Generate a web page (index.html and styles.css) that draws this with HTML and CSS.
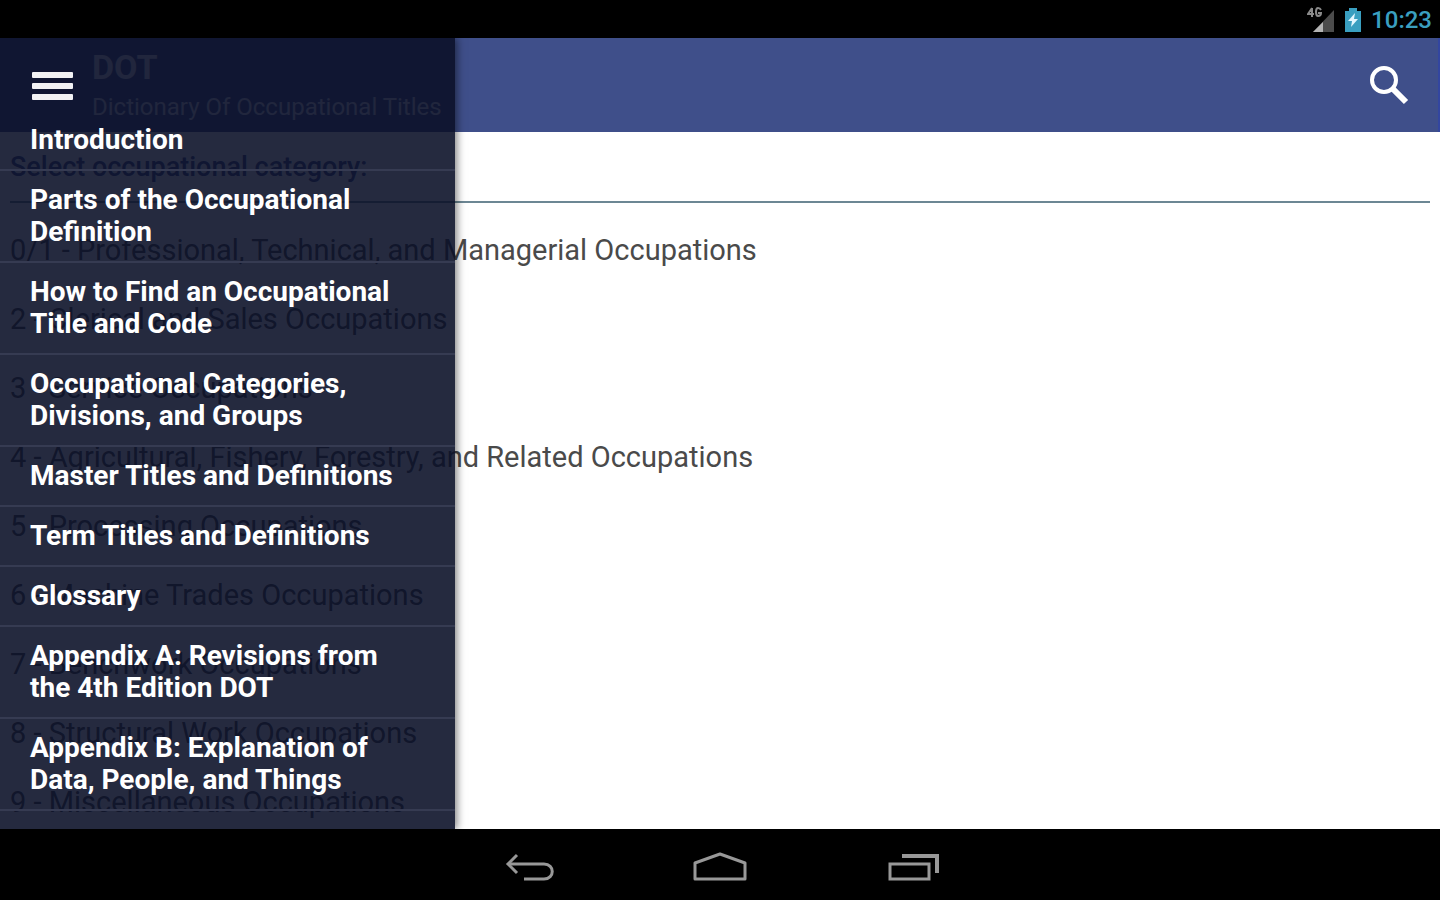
FILE: index.html
```html
<!DOCTYPE html>
<html lang="en">
<head>
    <meta charset="utf-8">
    <title>DOT - Dictionary Of Occupational Titles</title>
    <link rel="stylesheet" href="styles.css">
</head>
<body>
    <div class="status-bar">
        <svg class="signal" width="28" height="28" viewBox="0 0 28 28">
            <path d="M27 4V26H6Z" fill="#4c4c4c"/>
            <path d="M16 16V26H6Z" fill="#b4b4b4"/>
            <path d="M5 2L1 8H7M5 2V11M14 4Q13 2 11 2Q9 2 9 6Q9 10 11 10Q14 10 14 7H11" fill="none" stroke="#8a8a8a" stroke-width="2"/>
        </svg>
        <svg class="battery" width="16" height="24" viewBox="0 0 16 24">
            <path d="M0 3H4V0H12V3H16V24H0Z" fill="#3a9fc0"/>
            <path d="M10 5L3 13H7L6 19L13 11H9Z" fill="#e4f7ff"/>
        </svg>
        <span class="clock">10:23</span>
    </div>

    <div class="app">
        <header class="app-bar">
            <div class="app-title">
                <h1>DOT</h1>
                <p>Dictionary Of Occupational Titles</p>
            </div>
            <button class="icon-button" aria-label="Search">
                <svg width="42" height="42" viewBox="0 0 42 42" fill="none" stroke="#fff">
                    <circle cx="16" cy="16" r="12" stroke-width="4"/>
                    <path d="M25 25L38 38" stroke-width="6"/>
                </svg>
            </button>
        </header>

        <main class="content">
            <h2>Select occupational category:</h2>
            <ul class="categories">
                <li><a href="#">0/1 - Professional, Technical, and Managerial Occupations</a></li>
                <li><a href="#">2 - Clerical and Sales Occupations</a></li>
                <li><a href="#">3 - Service Occupations</a></li>
                <li><a href="#">4 - Agricultural, Fishery, Forestry, and Related Occupations</a></li>
                <li><a href="#">5 - Processing Occupations</a></li>
                <li><a href="#">6 - Machine Trades Occupations</a></li>
                <li><a href="#">7 - Benchwork Occupations</a></li>
                <li><a href="#">8 - Structural Work Occupations</a></li>
                <li><a href="#">9 - Miscellaneous Occupations</a></li>
            </ul>
        </main>

        <!-- drawer slides over the list -->
        <nav class="drawer">
            <button class="menu-button" aria-label="Close menu">
                <svg width="42" height="30" viewBox="0 0 42 30" fill="#f2f2f4">
                    <rect x="0" y="1" width="41" height="6" rx="1"/>
                    <rect x="0" y="12" width="41" height="6" rx="1"/>
                    <rect x="0" y="23" width="41" height="6" rx="1"/>
                </svg>
            </button>
            <a href="#">Introduction</a>
            <a href="#">Parts of the Occupational Definition</a>
            <a href="#">How to Find an Occupational Title and Code</a>
            <a href="#">Occupational Categories, Divisions, and Groups</a>
            <a href="#">Master Titles and Definitions</a>
            <a href="#">Term Titles and Definitions</a>
            <a href="#">Glossary</a>
            <a href="#">Appendix A: Revisions from the 4th Edition DOT</a>
            <a href="#">Appendix B: Explanation of Data, People, and Things</a>
        </nav>
    </div>

    <div class="system-bar">
        <button aria-label="Back">
            <svg width="56" height="36" viewBox="0 0 56 36" fill="none" stroke="#989898">
                <path d="M8 13H44C55 13 55 28 44 28H24" stroke-width="3"/>
                <path d="M17 4L8 13L17 22" stroke-width="3"/>
            </svg>
        </button>
        <button aria-label="Home">
            <svg width="56" height="36" viewBox="0 0 56 36" fill="none" stroke="#989898" stroke-width="3" stroke-linejoin="round">
                <path d="M3 28V12L28 3L53 12V28Z"/>
            </svg>
        </button>
        <button aria-label="Recent apps">
            <svg width="56" height="36" viewBox="0 0 56 36" fill="none" stroke="#989898" stroke-width="3">
                <rect x="6" y="13" width="39" height="15"/>
                <path d="M18 5H53V22" stroke-width="4"/>
            </svg>
        </button>
    </div>
</body>
</html>
```

FILE: styles.css
```css
* { box-sizing: border-box; }
body { margin: 0; height: 100vh; display: flex; flex-direction: column; background: #000; color: #4a4a4a; font-family: Roboto, "Liberation Sans", sans-serif; }
h1, h2, p, ul { margin: 0; padding: 0; }
a { color: inherit; text-decoration: none; }
button { padding: 0; border: 0; background: none; cursor: pointer; }
svg { display: block; }

.status-bar { flex: none; height: 38px; padding: 2px 8px 0; display: flex; align-items: center; justify-content: flex-end; gap: 10px; background: #000; }
.clock { color: #3a9fc0; font-size: 24px; font-weight: 500; line-height: 32px; }

.app { flex: 1; min-height: 0; position: relative; overflow: hidden; background: #fff; }
.app-bar { height: 94px; padding: 0 28px 0 92px; display: flex; align-items: center; justify-content: space-between; background: #3f4f8a; border-right: 2px solid #3346a0; color: #d4d8e8; }
.app-title { padding-top: 4px; }
.app-title h1 { font-size: 34px; line-height: 40px; }
.app-title p { font-size: 24px; line-height: 40px; }

.content { padding: 0 10px; }
.content h2 { height: 71px; border-bottom: 2px solid #6c8794; color: #3f4f8a; font-size: 27px; font-weight: 500; line-height: 70px; }
.categories { padding-top: 13px; list-style: none; }
.categories a { display: block; font-size: 29px; line-height: 69px; }

.drawer { position: absolute; top: 0; bottom: 0; left: 0; width: 455px; overflow: hidden; background: rgba(10, 16, 39, 0.89); box-shadow: 2px 0 8px rgba(0, 0, 0, 0.5); }
.menu-button { display: block; height: 73px; padding: 23px 32px 0; }
.drawer a { display: block; padding: 13px 48px 13px 30px; border-bottom: 2px solid #363b52; color: #fff; font-size: 28px; font-weight: 700; line-height: 32px; }

.system-bar { flex: none; height: 71px; padding-top: 8px; display: flex; align-items: center; justify-content: center; gap: 136px; background: #000; }
```
